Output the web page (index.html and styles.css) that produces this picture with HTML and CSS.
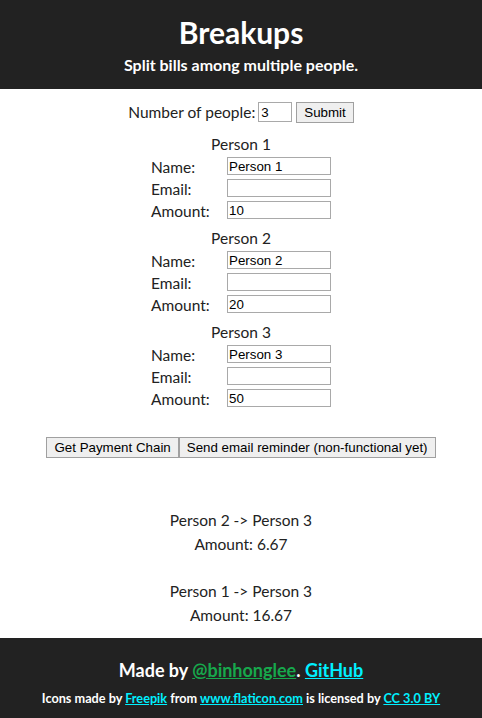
FILE: index.html
```html
<!DOCTYPE html>
<html>
<head>
<meta charset="utf-8">
<link rel="stylesheet" href="styles.css">
</head>
<body>
<header class="top">
  <h1 class="title">Breakups</h1>
  <p class="subtitle">Split bills among multiple people.</p>
</header>
<main class="main">
  <div class="count-row">
    <span>Number of people:</span>
    <input class="num" type="text" value="3">
    <button class="btn">Submit</button>
  </div>
  <div class="person">
    <div class="person-title">Person 1</div>
    <div class="grid">
      <span>Name:</span><input class="field" type="text" value="Person 1">
      <span>Email:</span><input class="field" type="text" value="">
      <span>Amount:</span><input class="field" type="text" value="10">
    </div>
  </div>
  <div class="person">
    <div class="person-title">Person 2</div>
    <div class="grid">
      <span>Name:</span><input class="field" type="text" value="Person 2">
      <span>Email:</span><input class="field" type="text" value="">
      <span>Amount:</span><input class="field" type="text" value="20">
    </div>
  </div>
  <div class="person">
    <div class="person-title">Person 3</div>
    <div class="grid">
      <span>Name:</span><input class="field" type="text" value="Person 3">
      <span>Email:</span><input class="field" type="text" value="">
      <span>Amount:</span><input class="field" type="text" value="50">
    </div>
  </div>
  <div class="actions">
    <button class="btn">Get Payment Chain</button><button class="btn">Send email reminder (non-functional yet)</button>
  </div>
  <div class="results">
    <div class="result">
      <div>Person 2 -&gt; Person 3</div>
      <div>Amount: 6.67</div>
    </div>
    <div class="result">
      <div>Person 1 -&gt; Person 3</div>
      <div>Amount: 16.67</div>
    </div>
  </div>
</main>
<footer class="foot">
  <p class="made">Made by <a class="green" href="#">@binhonglee</a>. <a class="cyan" href="#">GitHub</a></p>
  <p class="credits">Icons made by <a class="cyan" href="#">Freepik</a> from <a class="cyan" href="#">www.flaticon.com</a> is licensed by <a class="cyan" href="#">CC 3.0 BY</a></p>
</footer>
</body>
</html>
```
FILE: styles.css
```css
html, body {
  margin: 0;
  padding: 0;
}
body {
  width: 482px;
  height: 718px;
  display: flex;
  flex-direction: column;
  font-family: "Lato", "Open Sans", sans-serif;
  font-size: 15.5px;
  color: #222;
  background: #fff;
}
.top {
  background: #222;
  color: #fff;
  text-align: center;
  height: 89px;
  box-sizing: border-box;
  padding-top: 12px;
  font-family: "Lato", sans-serif;
}
.title {
  margin: 0;
  font-size: 30px;
  line-height: 40px;
  font-weight: 700;
}
.subtitle {
  margin: 3px 0 0;
  font-size: 16px;
  font-weight: 700;
  line-height: 20px;
}
.main {
  flex: 1;
  display: flex;
  flex-direction: column;
  align-items: center;
  padding-top: 13px;
}
.count-row {
  display: flex;
  align-items: center;
  gap: 3px;
  height: 20px;
}
.num {
  width: 34px;
  height: 20px;
  box-sizing: border-box;
  border: 1px solid #a9a9a9;
  font-family: "Liberation Sans", Arial, sans-serif;
  font-size: 13.333px;
  padding: 1px 2px;
  margin: 0 1px 0 0;
}
.btn {
  font-family: "Liberation Sans", Arial, sans-serif;
  font-size: 13.333px;
  height: 21px;
  padding: 1px 7px;
  border: 1px solid #a0a0a0;
  background: #efefef;
  color: #000;
  margin: 0;
}
.person {
  display: flex;
  flex-direction: column;
  align-items: center;
  margin-top: 11px;
}
.person + .person {
  margin-top: 6px;
}
.person-title {
  height: 22px;
  line-height: 22px;
}
.grid {
  display: grid;
  grid-template-columns: 76px 104px;
  grid-auto-rows: 22px;
  align-items: center;
}
.grid span {
  line-height: 22px;
  position: relative;
  top: 1px;
}
.field {
  width: 104px;
  height: 18px;
  box-sizing: border-box;
  border: 1px solid #a9a9a9;
  font-family: "Liberation Sans", Arial, sans-serif;
  font-size: 13.333px;
  padding: 0 1px;
  margin: 0;
  color: #000;
}
.actions {
  margin-top: 28px;
  display: flex;
}
.results {
  margin-top: 50px;
  display: flex;
  flex-direction: column;
  gap: 23px;
  text-align: center;
}
.result div {
  line-height: 24px;
}
.foot {
  background: #222;
  color: #fff;
  text-align: center;
  height: 80px;
  box-sizing: border-box;
  padding-top: 20px;
  font-family: "Lato", sans-serif;
  font-weight: 700;
}
.made {
  margin: 0;
  font-size: 18px;
  line-height: 24px;
}
.credits {
  margin: 7px 0 0;
  font-size: 12.7px;
  line-height: 18px;
}
.green {
  color: #17a84c;
}
.cyan {
  color: #00f0ff;
}
```
